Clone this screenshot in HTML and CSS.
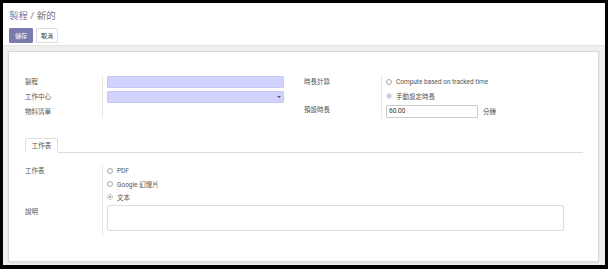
FILE: index.html
```html
<!DOCTYPE html>
<html lang="zh-Hant">
<head>
<meta charset="utf-8">
<link rel="stylesheet" href="styles.css">
</head>
<body>
<div class="window">
  <div class="cp">
    <div class="crumbs"><span class="crumb-link">製程</span><span class="crumb-sep"> / </span><span class="crumb-cur">新的</span></div>
    <div class="buttons">
      <button class="btn btn-primary">儲存</button>
      <button class="btn btn-secondary">取消</button>
    </div>
  </div>
  <div class="content">
    <div class="sheet">
      <div class="outer-group">
        <div class="group">
          <div class="label r1">製程</div>
          <div class="field r1"><div class="input required"></div></div>
          <div class="label r2">工作中心</div>
          <div class="field r2"><div class="input required select"><span class="caret"></span></div></div>
          <div class="label r3">物料清單</div>
          <div class="field r3"></div>
        </div>
        <div class="group">
          <div class="label r1">時長計算</div>
          <div class="field rr">
            <div class="radio"><span class="dot"></span><span>Compute based on tracked time</span></div>
            <div class="radio"><span class="dot checked"></span><span>手動設定時長</span></div>
          </div>
          <div class="label r4">預設時長</div>
          <div class="field r4"><div class="input num">60.00</div><span class="unit">分鐘</span></div>
        </div>
      </div>
      <div class="tabs">
        <div class="tab">工作表</div>
      </div>
      <div class="group wide">
        <div class="label t1">工作表</div>
        <div class="field t1">
          <div class="radio r-sm"><span class="dot"></span><span>PDF</span></div>
          <div class="radio r-sm"><span class="dot"></span><span>Google 幻燈片</span></div>
          <div class="radio r-sm"><span class="dot checked"></span><span>文本</span></div>
        </div>
        <div class="label t2">說明</div>
        <div class="field t2"><div class="textarea"></div></div>
      </div>
    </div>
  </div>
</div>
</body>
</html>
```

FILE: styles.css
```css
* { box-sizing: border-box; }
html, body { margin: 0; padding: 0; }
body {
  background: #000;
  width: 608px;
  height: 269px;
  overflow: hidden;
  font-family: Roboto, "Noto Sans CJK TC", sans-serif;
  color: #4c4c4c;
}
.window {
  margin: 3px 3px 4px 3px;
  height: 262px;
  background: #fff;
  display: flex;
  flex-direction: column;
}
.cp {
  height: 42px;
  padding: 6px 0 0 6px;
  background: #fff;
}
.crumbs {
  font-size: 9.5px;
  line-height: 14px;
  height: 14px;
}
.crumb-link { color: #7c7bad; }
.crumb-sep, .crumb-cur { color: #777; }
.buttons {
  display: flex;
  gap: 3px;
  margin-top: 5px;
}
.btn {
  font-family: inherit;
  font-size: 6px;
  height: 15px;
  padding: 0;
  border-radius: 1px;
  line-height: 13px;
  text-align: center;
  cursor: pointer;
}
.btn-primary {
  background: #7c7bad;
  border: 1px solid #7c7bad;
  color: #fff;
  width: 24px;
}
.btn-secondary {
  background: #fff;
  border: 1px solid #ddd;
  color: #333;
  width: 22px;
}
.content {
  flex: 1;
  background: #f0eeee;
  border-top: 1px solid #e3e3e3;
  padding: 5px 7px 3px 5px;
  display: flex;
}
.sheet {
  flex: 1;
  background: #fff;
  border: 1px solid #d9d7d7;
  box-shadow: 0 1px 2px rgba(0,0,0,0.08);
  padding: 23px 15px 0 16px;
  font-size: 6.5px;
}
.outer-group {
  display: grid;
  grid-template-columns: 279px 279px;
}
.group {
  display: grid;
  grid-template-columns: 77px 1fr;
  align-content: start;
}
.label {
  color: #555;
  font-weight: normal;
  line-height: 10px;
}
.field {
  border-left: 1px solid #e8e8e8;
  padding-left: 4px;
  display: flex;
  align-items: flex-start;
}
.r1, .r2 { height: 15px; }
.label.r1, .label.r2 { padding-top: 2px; }
.field.r1, .field.r2 { padding-top: 1px; }
.r3 { height: 13px; }
.label.r3 { padding-top: 2px; }
.input {
  height: 12px;
  border: 1px solid #ccc;
  border-radius: 1px;
}
.input.required {
  width: 177px;
  background: #d2d2ff;
  border-color: #c8c8ee;
  position: relative;
}
.caret {
  position: absolute;
  right: 2px;
  top: 4px;
  width: 0;
  height: 0;
  border-left: 2px solid transparent;
  border-right: 2px solid transparent;
  border-top: 2px solid #555;
}
.rr {
  flex-direction: column;
  height: 28px;
}
.radio {
  display: flex;
  align-items: center;
  gap: 4px;
  height: 14px;
  color: #555;
}
.dot {
  width: 6px;
  height: 6px;
  border: 1px solid #aaa;
  border-radius: 50%;
  position: relative;
  flex: none;
}
.dot.checked {
  border-color: #ccc;
}
.dot.checked::after {
  content: "";
  position: absolute;
  left: 1px;
  top: 1px;
  width: 2px;
  height: 2px;
  border-radius: 50%;
  background: #7c7bad;
}
.r4 { height: 16px; }
.label.r4 { padding-top: 2px; }
.field.r4 { align-items: center; }
.input.num {
  width: 92px;
  height: 13px;
  line-height: 11px;
  padding-left: 2px;
  color: #333;
  background: #fff;
}
.unit { margin-left: 5px; }
.tabs {
  margin-top: 19px;
  border-bottom: 1px solid #ddd;
  height: 15px;
  display: flex;
}
.tab {
  width: 33px;
  height: 15px;
  border: 1px solid #ddd;
  border-bottom: 1px solid #fff;
  border-radius: 2px 2px 0 0;
  text-align: center;
  line-height: 14px;
  background: #fff;
  color: #555;
}
.group.wide {
  margin-top: 12px;
}
.t1 { height: 39px; }
.label.t1 { padding-top: 1px; }
.field.t1 { flex-direction: column; }
.r-sm { height: 13px; }
.r-sm:first-child { margin-top: -1px; }
.t2 { height: 32px; }
.label.t2 { padding-top: 3px; }
.textarea {
  width: 457px;
  height: 26px;
  border: 1px solid #ddd;
  border-radius: 2px;
  margin-top: 1px;
}
```
